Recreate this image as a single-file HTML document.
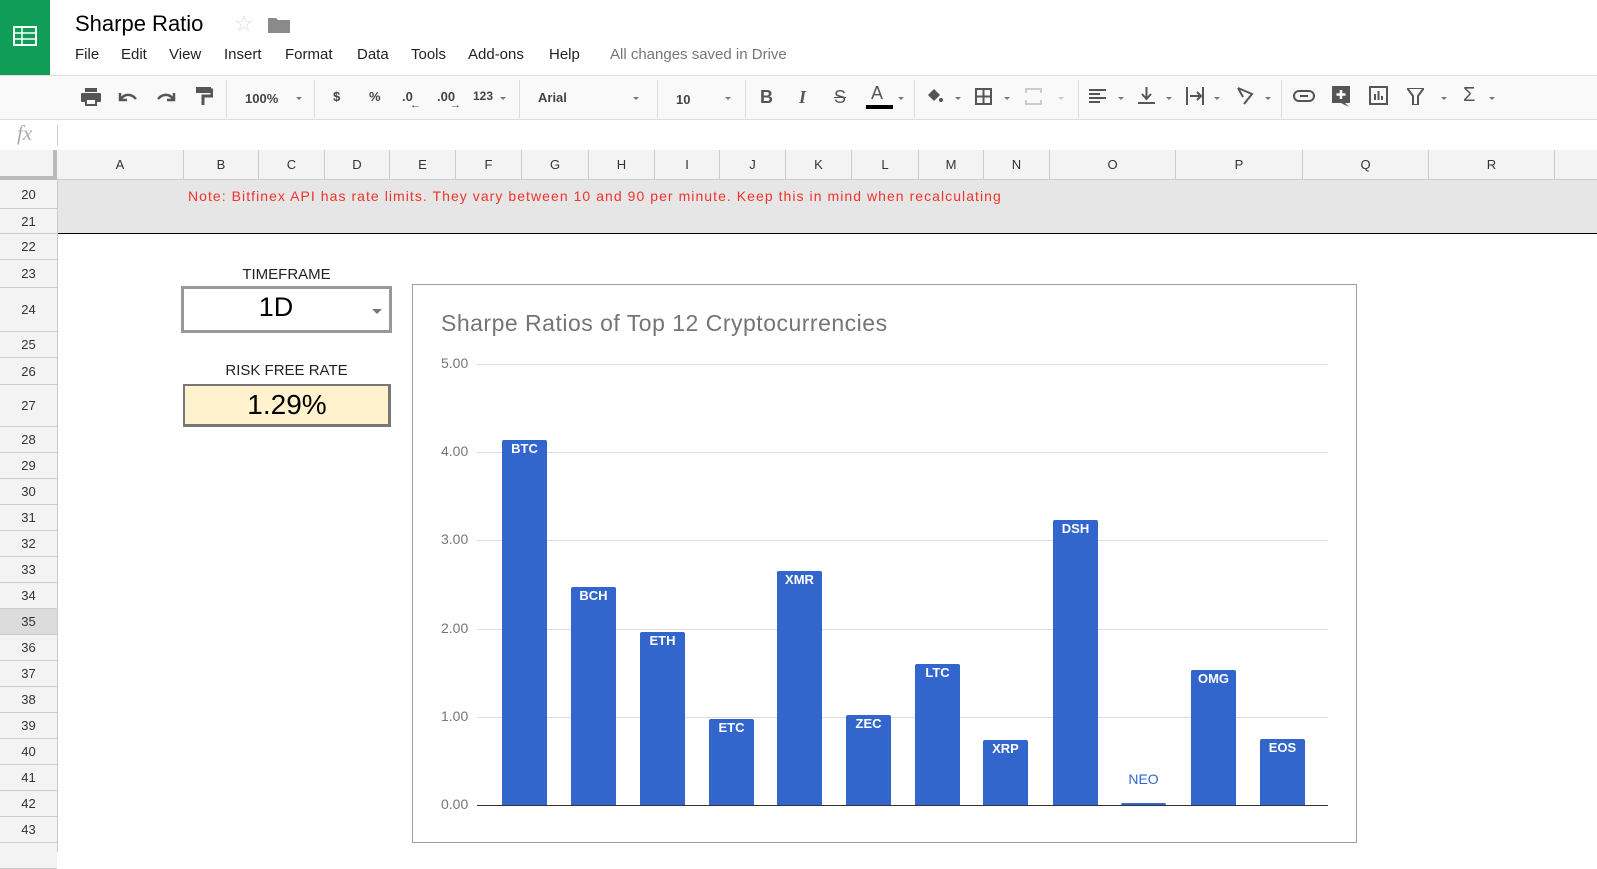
<!DOCTYPE html>
<html><head><meta charset="utf-8"><style>
*{margin:0;padding:0;box-sizing:border-box}
body{width:1597px;height:852px;overflow:hidden;background:#fff;font-family:"Liberation Sans",Arial,sans-serif;position:relative}
.a{position:absolute}
.menu span{position:absolute;top:46px;font-size:15px;color:#222}
.tb{position:absolute;font-size:13px;color:#444;top:89px}
.sep{position:absolute;top:80px;width:1px;height:38px;background:#ddd}
.dd{position:absolute;top:97px;width:0;height:0;border-left:3px solid transparent;border-right:3px solid transparent;border-top:3px solid #777}
.col{position:absolute;top:150px;height:30px;border-right:1px solid #ccc;font-size:13px;color:#333;text-align:center;line-height:30px}
.row{position:absolute;left:0;width:57px;border-bottom:1px solid #ccc;font-size:13px;color:#333;text-align:center;background:#f3f3f3}
.bar{position:absolute;width:45px;background:#3366cc;border-radius:2px 2px 0 0;color:#fff;font-weight:bold;font-size:13px;text-align:center;padding-top:1px}
.grid{position:absolute;left:477px;width:851px;height:1px;background:#ddd}
.yl{position:absolute;left:441px;width:40px;font-size:14px;color:#757575}
</style></head><body>
<div class="a" style="left:0;top:0;width:50px;height:75px;background:#0f9d58"></div>
<svg class="a" style="left:13px;top:26px" width="24" height="20" viewBox="0 0 24 20"><rect x="1" y="1" width="22" height="18" fill="none" stroke="#fff" stroke-width="2"/><line x1="1" y1="7" x2="23" y2="7" stroke="#fff" stroke-width="1.5"/><line x1="1" y1="13" x2="23" y2="13" stroke="#fff" stroke-width="1.5"/><line x1="9" y1="1" x2="9" y2="19" stroke="#fff" stroke-width="1.5"/></svg>
<div class="a" style="left:75px;top:11px;font-size:22px;color:#000">Sharpe Ratio</div>
<div class="a" style="left:234px;top:11px;font-size:22px;color:#ddd">☆</div>
<svg class="a" style="left:268px;top:16px" width="22" height="17"><path d="M0 2h8l2 2h12v13H0z" fill="#8a8a8a"/></svg>
<div class="menu"><span style="left:75px">File</span><span style="left:121px">Edit</span><span style="left:169px">View</span><span style="left:224px">Insert</span><span style="left:285px">Format</span><span style="left:357px">Data</span><span style="left:411px">Tools</span><span style="left:468px">Add-ons</span><span style="left:549px">Help</span><span style="left:610px;color:#777">All changes saved in Drive</span></div>
<div class="a" style="left:0;top:75px;width:1597px;height:45px;background:#f9f9f9;border-top:1px solid #ddd;border-bottom:1px solid #ddd"></div>
<svg class="a" style="left:80px;top:87px" width="22" height="20"><rect x="5" y="1" width="12" height="4" fill="#555"/><rect x="1" y="6" width="20" height="9" rx="1" fill="#555"/><rect x="5" y="12" width="12" height="7" fill="#555"/><rect x="7" y="13" width="8" height="4" fill="#f9f9f9"/></svg>
<svg class="a" style="left:117px;top:89px" width="22" height="14"><path d="M3 4v7h7M4 10c3-5 10-6 15 0" fill="none" stroke="#555" stroke-width="2.5"/></svg>
<svg class="a" style="left:155px;top:89px" width="22" height="14"><path d="M19 4v7h-7M18 10c-3-5-10-6-15 0" fill="none" stroke="#555" stroke-width="2.5"/></svg>
<svg class="a" style="left:195px;top:86px" width="18" height="20"><rect x="1" y="1" width="15" height="6" fill="#555"/><path d="M16 4h1v6H8v9" fill="none" stroke="#555" stroke-width="3"/></svg>
<div class="sep" style="left:226px"></div>
<div class="tb" style="left:245px;top:91px;font-weight:bold;color:#444">100%</div><div class="dd" style="left:296px"></div>
<div class="sep" style="left:314px"></div>
<div class="tb" style="left:333px;font-weight:bold">$</div>
<div class="tb" style="left:369px;font-weight:bold">%</div>
<div class="tb" style="left:402px;font-weight:bold">.0</div><div class="a" style="left:410px;top:99px;font-size:11px;color:#444">←</div>
<div class="tb" style="left:437px;font-weight:bold">.00</div><div class="a" style="left:450px;top:99px;font-size:11px;color:#444">→</div>
<div class="tb" style="left:473px;font-weight:bold;font-size:12px">123</div><div class="dd" style="left:500px"></div>
<div class="sep" style="left:519px"></div>
<div class="tb" style="left:538px;top:90px;font-weight:bold;font-size:13px">Arial</div><div class="dd" style="left:633px"></div>
<div class="sep" style="left:657px"></div>
<div class="tb" style="left:676px;top:92px;font-weight:bold">10</div><div class="dd" style="left:725px"></div>
<div class="sep" style="left:745px"></div>
<div class="tb" style="left:760px;top:87px;font-size:18px;font-weight:bold;color:#555">B</div>
<div class="tb" style="left:799px;top:87px;font-size:18px;font-style:italic;font-family:'Liberation Serif',serif;font-weight:bold;color:#555">I</div>
<div class="tb" style="left:834px;top:87px;font-size:18px;text-decoration:line-through;color:#555">S</div>
<div class="tb" style="left:871px;top:83px;font-size:18px;color:#555">A</div><div class="a" style="left:866px;top:105px;width:27px;height:4px;background:#000"></div><div class="dd" style="left:898px"></div>
<div class="sep" style="left:914px"></div>
<svg class="a" style="left:924px;top:86px" width="20" height="18"><path d="M4 9l6-6 6 6-6 6z" fill="#555"/><circle cx="17" cy="14" r="2" fill="#555"/></svg><div class="dd" style="left:955px"></div>
<svg class="a" style="left:975px;top:88px" width="17" height="17"><path d="M1 1h15v15H1zM8.5 1v15M1 8.5h15" fill="none" stroke="#555" stroke-width="2"/></svg><div class="dd" style="left:1004px"></div>
<svg class="a" style="left:1025px;top:88px" width="17" height="17"><path d="M1 5V1h15v4M1 12v4h15v-4" fill="none" stroke="#ccc" stroke-width="2"/></svg><div class="dd" style="left:1058px;border-top-color:#ccc"></div>
<div class="sep" style="left:1078px"></div>
<svg class="a" style="left:1089px;top:88px" width="17" height="16"><path d="M0 2h17M0 6h11M0 10h17M0 14h11" stroke="#555" stroke-width="2"/></svg><div class="dd" style="left:1118px"></div>
<svg class="a" style="left:1138px;top:87px" width="17" height="18"><path d="M8.5 0v11M4 7l4.5 5 4.5-5M0 16h17" fill="none" stroke="#555" stroke-width="2"/></svg><div class="dd" style="left:1166px"></div>
<svg class="a" style="left:1186px;top:87px" width="19" height="18"><path d="M1 0v18M17 0v18M4 9h10M11 5l4 4-4 4" fill="none" stroke="#555" stroke-width="2"/></svg><div class="dd" style="left:1214px"></div>
<svg class="a" style="left:1236px;top:86px" width="20" height="20"><path d="M2 2l14 6-8 10M2 2l5 9" fill="none" stroke="#555" stroke-width="2"/></svg><div class="dd" style="left:1265px"></div>
<div class="sep" style="left:1281px"></div>
<svg class="a" style="left:1293px;top:90px" width="22" height="12"><rect x="1" y="1" width="20" height="10" rx="5" fill="none" stroke="#555" stroke-width="2"/><path d="M7 6h8" stroke="#555" stroke-width="2"/></svg>
<svg class="a" style="left:1332px;top:86px" width="18" height="21"><path d="M0 0h18v17h-5l4 4-8-4H0z" fill="#555"/><path d="M9 4v9M4.5 8.5h9" stroke="#fff" stroke-width="2.5"/></svg>
<svg class="a" style="left:1369px;top:86px" width="19" height="19"><rect x="1" y="1" width="17" height="17" fill="none" stroke="#555" stroke-width="2"/><path d="M6 14V8M9.5 14V5M13 14v-4" stroke="#555" stroke-width="2"/></svg>
<svg class="a" style="left:1407px;top:88px" width="17" height="17"><path d="M0 0h17l-6 8v9H6V8z" fill="none" stroke="#555" stroke-width="2"/></svg><div class="dd" style="left:1441px"></div>
<div class="tb" style="left:1463px;top:84px;font-size:20px;color:#555">Σ</div><div class="dd" style="left:1489px"></div>
<div class="a" style="left:17px;top:121px;font-size:21px;font-style:italic;color:#aaa;font-family:'Liberation Serif',serif">fx</div>
<div class="a" style="left:57px;top:125px;width:1px;height:21px;background:#ccc"></div>
<div class="a" style="left:0;top:150px;width:1597px;height:1px;background:#ccc"></div>
<div class="a" style="left:0;top:150px;width:1597px;height:30px;background:#f3f3f3;border-bottom:1px solid #ccc"></div>
<div class="a" style="left:0;top:150px;width:57px;height:30px;border-right:4px solid #bbb;border-bottom:4px solid #bbb;background:#f3f3f3"></div>
<div class="col" style="left:57px;width:127px">A</div><div class="col" style="left:184px;width:75px">B</div><div class="col" style="left:259px;width:66px">C</div><div class="col" style="left:325px;width:65px">D</div><div class="col" style="left:390px;width:66px">E</div><div class="col" style="left:456px;width:66px">F</div><div class="col" style="left:522px;width:67px">G</div><div class="col" style="left:589px;width:66px">H</div><div class="col" style="left:655px;width:65px">I</div><div class="col" style="left:720px;width:66px">J</div><div class="col" style="left:786px;width:66px">K</div><div class="col" style="left:852px;width:67px">L</div><div class="col" style="left:919px;width:65px">M</div><div class="col" style="left:984px;width:66px">N</div><div class="col" style="left:1050px;width:126px">O</div><div class="col" style="left:1176px;width:127px">P</div><div class="col" style="left:1303px;width:126px">Q</div><div class="col" style="left:1429px;width:126px">R</div>
<div class="a" style="left:57px;top:180px;width:1540px;height:54px;background:#e6e6e6"></div>
<div class="a" style="left:57px;top:233px;width:1540px;height:1px;background:#000"></div>
<div class="a" style="left:188px;top:188px;font-size:14px;letter-spacing:1.05px;color:#f0332c;white-space:nowrap">Note: Bitfinex API has rate limits. They vary between 10 and 90 per minute. Keep this in mind when recalculating</div>
<div class="a" style="left:57px;top:180px;width:1px;height:672px;background:#ccc"></div>
<div class="row" style="top:180px;height:29px;line-height:29px">20</div>
<div class="row" style="top:209px;height:25px;line-height:25px">21</div>
<div class="row" style="top:234px;height:26px;line-height:26px">22</div>
<div class="row" style="top:260px;height:28px;line-height:28px">23</div>
<div class="row" style="top:288px;height:44px;line-height:44px">24</div>
<div class="row" style="top:332px;height:26px;line-height:26px">25</div>
<div class="row" style="top:358px;height:27px;line-height:27px">26</div>
<div class="row" style="top:385px;height:42px;line-height:42px">27</div>
<div class="row" style="top:427px;height:26px;line-height:26px">28</div>
<div class="row" style="top:453px;height:26px;line-height:26px">29</div>
<div class="row" style="top:479px;height:26px;line-height:26px">30</div>
<div class="row" style="top:505px;height:26px;line-height:26px">31</div>
<div class="row" style="top:531px;height:26px;line-height:26px">32</div>
<div class="row" style="top:557px;height:26px;line-height:26px">33</div>
<div class="row" style="top:583px;height:26px;line-height:26px">34</div>
<div class="row" style="top:609px;height:26px;line-height:26px;background:#dcdcdc">35</div>
<div class="row" style="top:635px;height:26px;line-height:26px">36</div>
<div class="row" style="top:661px;height:26px;line-height:26px">37</div>
<div class="row" style="top:687px;height:26px;line-height:26px">38</div>
<div class="row" style="top:713px;height:26px;line-height:26px">39</div>
<div class="row" style="top:739px;height:26px;line-height:26px">40</div>
<div class="row" style="top:765px;height:26px;line-height:26px">41</div>
<div class="row" style="top:791px;height:26px;line-height:26px">42</div>
<div class="row" style="top:817px;height:26px;line-height:26px">43</div>
<div class="row" style="top:843px;height:26px;line-height:26px"></div>
<div class="a" style="left:181px;top:266px;width:211px;text-align:center;font-size:15px;color:#222">TIMEFRAME</div>
<div class="a" style="left:181px;top:286px;width:211px;height:47px;border:3px solid #999;background:#fff"></div>
<div class="a" style="left:181px;top:292px;width:190px;text-align:center;font-size:27px;color:#000">1D</div>
<div class="dd" style="left:372px;top:309px;border-left-width:5px;border-right-width:5px;border-top:5px solid #777"></div>
<div class="a" style="left:181px;top:362px;width:211px;text-align:center;font-size:15px;color:#222">RISK FREE RATE</div>
<div class="a" style="left:183px;top:384px;width:208px;height:43px;background:#fff2cc;border:2px solid #777;border-right-width:3px;border-bottom-width:3px"></div>
<div class="a" style="left:183px;top:389px;width:208px;text-align:center;font-size:28px;color:#000">1.29%</div>
<div class="a" style="left:412px;top:284px;width:945px;height:559px;border:1px solid #9e9e9e;background:#fff"></div>
<div class="a" style="left:441px;top:310px;font-size:23px;letter-spacing:0.5px;color:#757575;white-space:nowrap">Sharpe Ratios of Top 12 Cryptocurrencies</div>
<div class="grid" style="top:364px"></div><div class="grid" style="top:452px"></div><div class="grid" style="top:540px"></div><div class="grid" style="top:629px"></div><div class="grid" style="top:717px"></div>
<div class="grid" style="top:805px;background:#333"></div>
<div class="yl" style="top:355px">5.00</div><div class="yl" style="top:443px">4.00</div><div class="yl" style="top:531px">3.00</div><div class="yl" style="top:620px">2.00</div><div class="yl" style="top:708px">1.00</div><div class="yl" style="top:796px">0.00</div>
<div class="bar" style="left:502px;top:440px;height:365px">BTC</div>
<div class="bar" style="left:571px;top:587px;height:218px">BCH</div>
<div class="bar" style="left:640px;top:632px;height:173px">ETH</div>
<div class="bar" style="left:709px;top:719px;height:86px">ETC</div>
<div class="bar" style="left:777px;top:571px;height:234px">XMR</div>
<div class="bar" style="left:846px;top:715px;height:90px">ZEC</div>
<div class="bar" style="left:915px;top:664px;height:141px">LTC</div>
<div class="bar" style="left:983px;top:740px;height:65px">XRP</div>
<div class="bar" style="left:1053px;top:520px;height:285px">DSH</div>
<div class="bar" style="left:1121px;top:803px;height:2px;padding:0"></div>
<div class="a" style="left:1121px;top:771px;width:45px;text-align:center;font-size:14px;color:#3366cc">NEO</div>
<div class="bar" style="left:1191px;top:670px;height:135px">OMG</div>
<div class="bar" style="left:1260px;top:739px;height:66px">EOS</div>
</body></html>
